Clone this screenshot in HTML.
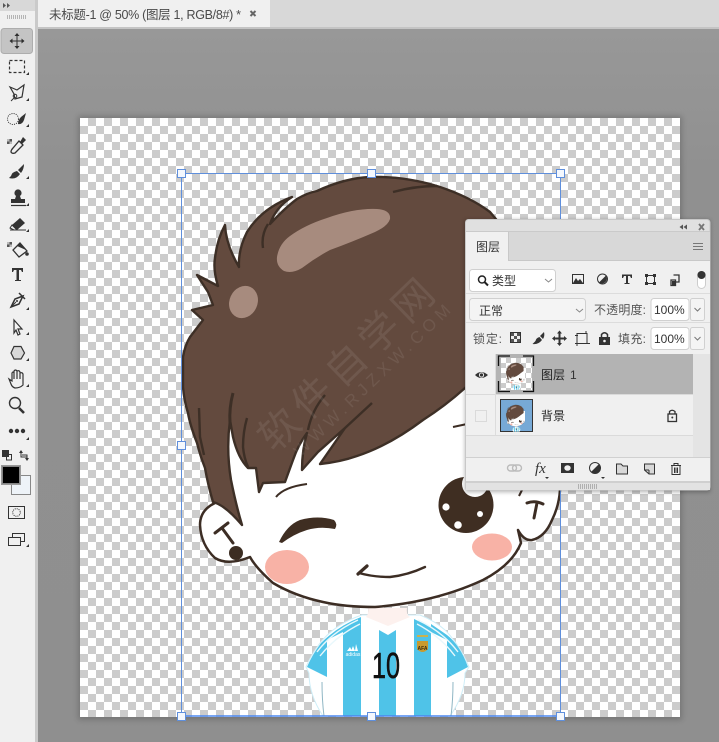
<!DOCTYPE html>
<html><head><meta charset="utf-8">
<style>
html,body{margin:0;padding:0;width:719px;height:742px;overflow:hidden;background:#919191}
svg{display:block}
text{font-family:"Liberation Sans","Noto Sans CJK SC",sans-serif}
</style></head>
<body>
<svg width="719" height="742" viewBox="0 0 719 742" xmlns="http://www.w3.org/2000/svg">
<defs>
<pattern id="chk" x="80" y="118" width="16" height="16" patternUnits="userSpaceOnUse"><rect width="16" height="16" fill="#fff"/><rect x="8" width="8" height="8" fill="#ccc"/><rect y="8" width="8" height="8" fill="#ccc"/></pattern>
<pattern id="chk2" x="501" y="358" width="10" height="10" patternUnits="userSpaceOnUse"><rect width="10" height="10" fill="#fff"/><rect x="5" width="5" height="5" fill="#ccc"/><rect y="5" width="5" height="5" fill="#ccc"/></pattern>
<linearGradient id="bgG" x1="0" y1="0" x2="0" y2="1"><stop offset="0" stop-color="#989898"/><stop offset=".2" stop-color="#909090"/><stop offset="1" stop-color="#8f8f8f"/></linearGradient>
<filter id="bl" x="-10%" y="-10%" width="120%" height="120%"><feGaussianBlur stdDeviation="3"/></filter>
<filter id="bs" x="-10%" y="-10%" width="120%" height="120%"><feGaussianBlur stdDeviation="2"/></filter>
<clipPath id="cv"><rect x="80" y="118" width="600" height="598"/></clipPath>
</defs>

<!-- workspace -->
<rect x="38" y="28" width="681" height="714" fill="url(#bgG)"/>
<rect x="78" y="116" width="604" height="604" fill="#000" opacity=".18" filter="url(#bl)"/>
<rect x="80" y="118" width="600" height="599" fill="url(#chk)"/>

<!-- artwork -->
<g id="art" clip-path="url(#cv)">
 <!-- shirt -->
 <path d="M362 615 Q335 624 320 643 Q311 655 306 667 L309 673 Q309 695 323 716 L450 716 Q465 695 465 673 L469 667 Q460 645 445 630 Q435 621 420 615 Z" fill="#fff" stroke="#cfeef8" stroke-width="1"/>
 <path d="M361 617 Q338 626 321 643 Q312 655 307 667 L327 677 L327 640 L343 632 L343 716 L361 716 Z" fill="#4fc3e8"/>
 <path d="M379 630 L388 635 L396 630 L396 716 L379 716 Z" fill="#4fc3e8"/>
 <path d="M414 619 L431 627 L431 716 L414 716 Z" fill="#4fc3e8"/>
 <path d="M447 640 L447 678 L468 667 Q460 645 447 635 L431 624 L431 632 Z" fill="#4fc3e8"/>
 <path d="M317 652 Q332 632 358 620 M320 656 Q336 636 360 624" stroke="#e8f8fc" stroke-width="1.400" fill="none"/>
 <path d="M458 652 Q443 632 418 620 M455 656 Q440 636 417 624" stroke="#e8f8fc" stroke-width="1.400" fill="none"/>
 <path d="M368 608 L407 608 Q406 615 410 617 L388 626 L366 617 Q369 613 368 608 Z" fill="#fdf1ee"/>
 <path d="M322 682 Q322 700 324 716 M453 682 Q453 700 451 716" stroke="#8fb6c4" stroke-width="1" fill="none"/>
 <path d="M347 651 L350 647 L352 651 Z M351 651 L353 646 L355 651 Z M355 651 L356 644 L358 651 Z" fill="#fff"/>
 <text x="353" y="656" font-size="5" fill="#fff" text-anchor="middle">adidas</text>
 <rect x="417" y="635" width="11" height="2" fill="#c9b24e"/>
 <path d="M417 641 h11 v8 q-5.500 6 -11 0 Z" fill="#c89a2e"/>
 <text x="422.500" y="650" font-size="5" font-weight="bold" fill="#3a2b10" text-anchor="middle">AFA</text>
 <text x="386" y="678" font-size="36" fill="#111" stroke="#111" stroke-width=".6" text-anchor="middle" textLength="28" lengthAdjust="spacingAndGlyphs">10</text>

 <!-- face -->
 <path d="M215 503 Q200 510 200 525 Q201 545 215 558 Q228 566 250 557 Q256 568 273 583 Q295 596 323 602 Q345 607 375 607 Q400 605 423 600 Q455 593 483 580 Q512 565 521 543 L518 530 Q524 541 532 540 Q545 537 552 520 Q559 506 560 490 L560 300 L240 300 L200 420 Z" fill="#fff"/>
 <path d="M215 503 Q200 510 200 525 Q201 545 215 558 Q228 566 250 557 Q256 568 273 583 Q295 596 323 602 Q345 607 375 607 Q400 605 423 600 Q455 593 483 580 Q512 565 521 543 L518 530 Q524 541 532 540 Q545 537 552 520 Q559 506 560 490" fill="none" stroke="#3c2d24" stroke-width="2.500" stroke-linejoin="round"/>
 <path d="M519 496 L522 490" stroke="#3c2d24" stroke-width="2" fill="none"/>
 <!-- ears -->
 <path d="M215 533 L228 523 M222 528 L233 543" stroke="#3c2d24" stroke-width="3" fill="none" stroke-linecap="round"/>
 <circle cx="236" cy="553" r="7" fill="#3c2d22"/>
 <path d="M527 503 Q535 500 543 504 M537 503 L534 518" stroke="#3c2d24" stroke-width="3" fill="none" stroke-linecap="round"/>
 <!-- eye -->
 <ellipse cx="466" cy="505" rx="27.500" ry="28" fill="#3f2e22"/>
 <circle cx="475" cy="484" r="13" fill="#fff"/>
 <circle cx="446" cy="507" r="3.600" fill="#fff"/>
 <circle cx="458" cy="525" r="3.800" fill="#fff"/>
 <circle cx="480" cy="514" r="3" fill="#fff"/>
 <!-- wink -->
 <path d="M279 542 Q287 525 300 520 Q318 515 334 520 Q338 524 335 529 Q320 526 307 530 Q294 534 282 543 Z" fill="#3f2e22"/>
 <path d="M276 497 Q284 487 307 484" stroke="#3c2d24" stroke-width="2" fill="none"/>
 <path d="M453 427 L467 424" stroke="#3c2d24" stroke-width="2" fill="none"/>
 <!-- cheeks -->
 <ellipse cx="287" cy="567" rx="22" ry="17" fill="#f8b2a6"/>
 <ellipse cx="492" cy="547" rx="20" ry="13.500" fill="#f8b2a6"/>
 <!-- mouth -->
 <path d="M358 574 L367 566" stroke="#3c2d24" stroke-width="3.200" fill="none" stroke-linecap="round"/>
 <path d="M359 573 Q373 577 390 577 Q408 575 425 567" stroke="#3c2d24" stroke-width="2.400" fill="none" stroke-linecap="round"/>

 <!-- hair -->
 <path d="M197 275 L218 286 Q213 270 215 258 Q217 240 225 225 Q226 245 239 267 Q238 250 247 232 Q262 208 292 197 Q276 207 270 224 Q285 208 297 199 Q307 193 317 191 Q345 178 370 177 Q405 176 440 187 Q470 197 490 212 L530 260 L530 340 L465 388 Q445 406 423 420 Q390 445 357 456 Q340 462 320 464 L345 428 L318 452 L302 470 Q302 450 307 433 Q298 445 293 460 L285 482 L263 483 L259 492 L256 468 L248 468 Q238 458 233 437 L230 420 Q226 450 231 480 Q236 505 242 525 Q225 505 213 502 Q208 485 205 468 Q200 455 197 443 Q190 425 188 413 Q184 400 183 387 L183 357 Q185 345 190 337 L203 320 L192 310 L213 305 L208 292 Z" fill="#634a3e" stroke="#3d2f26" stroke-width="2.400" stroke-linejoin="round"/>
 <!-- hair inner strokes -->
 <path d="M233 393 Q229 408 230 423" stroke="#3d2f26" stroke-width="3" fill="none"/>
 <path d="M247 418 Q243 432 243 447 Q244 458 248 467" stroke="#3d2f26" stroke-width="2.400" fill="none"/>
 <path d="M199 408 L200 437 L204 455" stroke="#3d2f26" stroke-width="2.400" fill="none"/>
 <path d="M372 403 L345 428 M325 395 Q312 410 308 430 M393 192 Q415 186 437 186 M268 224 Q261 235 263 248" stroke="#3d2f26" stroke-width="2.400" fill="none"/>
 <!-- highlights -->
 <path d="M277 257 Q279 244 290 236 Q305 225 327 218 Q355 208 377 209 Q391 210 390 219 Q388 226 375 232 Q352 242 330 250 Q315 258 302 268 Q292 274 284 271 Q276 266 277 257 Z" fill="#a78b7e"/>
 <ellipse cx="243.500" cy="302" rx="14" ry="16.500" transform="rotate(25 243.500 302)" fill="#a78b7e"/>
</g>
<!-- watermark -->
<g fill="#fff" fill-opacity=".08" transform="rotate(-44 346 365)">
 <text x="346" y="379" font-size="40" text-anchor="middle" textLength="226" lengthAdjust="spacing">软件自学网</text>
 <text x="354" y="400" font-size="17" text-anchor="middle" textLength="210" lengthAdjust="spacing">WWW.RJZXW.COM</text>
</g>

<!-- transform box -->
<rect x="181.500" y="173.500" width="379" height="542.500" fill="none" stroke="#5f8fdc" stroke-width="1"/>
<path d="M181 716 H560" stroke="#4d88f0" stroke-width="1.500"/>
<g fill="#f4f8fe" stroke="#5f8fdc">
 <rect x="177.500" y="169.500" width="8" height="8"/><rect x="367.500" y="169.500" width="8" height="8"/><rect x="556.500" y="169.500" width="8" height="8"/>
 <rect x="177.500" y="441.500" width="8" height="8"/>
 <rect x="177.500" y="712.500" width="8" height="8"/><rect x="367.500" y="712.500" width="8" height="8"/><rect x="556.500" y="712.500" width="8" height="8"/>
</g>

<!-- tab bar -->
<rect x="38" y="0" width="681" height="28" fill="#d8d8d8"/>
<rect x="38" y="0" width="232" height="28" fill="#f0f0f0"/>
<rect x="38" y="27" width="681" height="2" fill="#c4c4c4"/>
<text x="49" y="19" font-size="12.500" fill="#4a4a4a" textLength="192" lengthAdjust="spacing">未标题-1 @ 50% (图层 1, RGB/8#) *</text>
<path d="M250.500 11 L255.500 16 M255.500 11 L250.500 16" stroke="#666" stroke-width="2"/>

<!-- toolbar -->
<rect x="0" y="0" width="35" height="742" fill="#f0f0f0"/>
<rect x="35" y="0" width="3" height="742" fill="#cacaca"/>
<rect x="0" y="0" width="35" height="11" fill="#d8d8d8"/>
<path d="M3 3 L6 5.500 L3 8 Z M7 3 L10 5.500 L7 8 Z" fill="#555"/>
<path d="M7.500 15 V19 M9.500 15 V19 M11.500 15 V19 M13.500 15 V19 M15.500 15 V19 M17.500 15 V19 M19.500 15 V19 M21.500 15 V19 M23.500 15 V19 M25.500 15 V19" stroke="#b4b4b4" stroke-width="1"/>
<rect x="1" y="28.500" width="31.500" height="25" rx="3" fill="#c4c4c4" stroke="#adadad"/>
<!-- move -->
<g fill="#2e2e2e">
 <path d="M16.500 34 H17.500 V48 H16.500 Z M10 40.500 H24 V41.500 H10 Z"/>
 <path d="M17 33 L19.500 36 H14.500 Z M17 49 L19.500 46 H14.500 Z M9.500 41 L12.500 38.500 V43.500 Z M24.500 41 L21.500 38.500 V43.500 Z"/>
</g>
<!-- marquee -->
<rect x="9.500" y="60.500" width="15" height="12" fill="none" stroke="#333" stroke-width="1.200" stroke-dasharray="3 2"/>
<!-- lasso -->
<path d="M10 87 L17 90 L24 85 L22 97 L15 99 L14 94 Z" fill="none" stroke="#333" stroke-width="1.200"/>
<circle cx="15" cy="96" r="1.800" fill="none" stroke="#333"/>
<path d="M14 98 L11 101" stroke="#333"/>
<!-- quick select -->
<circle cx="13" cy="119" r="5.500" fill="none" stroke="#333" stroke-dasharray="1 1.200"/>
<path d="M26 113 L21 117 Q18 120 18 124 Q22 125 24 120 Z" fill="#333"/>
<!-- eyedropper -->
<g><rect x="7" y="139" width="5" height="5" fill="#555"/><path d="M7 139 h2.500 v2.500 h-2.500 z M9.500 141.500 h2.500 v2.500 h-2.500 z" fill="#bbb"/></g>
<path d="M23 137 L26 140 L22 144 L20 142 Z" fill="#333"/>
<path d="M19 141 L23 145 L15 153 Q12 154 11 152 Q11 150 13 148 Z" fill="none" stroke="#333" stroke-width="1.300"/>
<!-- brush -->
<path d="M24 164 L18 170 L21 173 Q24 169 24 164 Z M17 171 Q12 172 11 176 L9 178 Q16 180 20 174 Z" fill="#333"/>
<!-- stamp -->
<circle cx="18" cy="193" r="3.600" fill="#333"/>
<path d="M16 196 H20 L21 199 H25 V203 H11 V199 H15 Z" fill="#333"/>
<path d="M11 205.500 H26" stroke="#333" stroke-width="1.200"/>
<!-- eraser -->
<path d="M20 218 L25 223 L17 230 L12 225 Z" fill="#333"/>
<path d="M12 225 L17 230 L14 230 L10 228 Z M10 230 H26" fill="none" stroke="#333"/>
<!-- bucket -->
<g><rect x="7" y="242" width="5" height="5" fill="#555"/><path d="M7 242 h2.500 v2.500 h-2.500 z M9.500 244.500 h2.500 v2.500 h-2.500 z" fill="#bbb"/></g>
<path d="M20 243 L27 251 L19 257 L13 250 Z" fill="none" stroke="#333" stroke-width="1.300"/>
<path d="M17 246 L20 243 L26 250 Z" fill="#333"/>
<circle cx="27" cy="254" r="1.800" fill="#333"/>
<!-- T -->
<path d="M12 268 H23 V272 H22 L21 270 H19 V280 H21 V281 H15 V280 H16.500 V270 H14 L13 272 H12 Z" fill="#333"/>
<!-- pen -->
<path d="M23 296 L15 299 L11 307 L19 304 Z M19 293 L25 299" fill="none" stroke="#333" stroke-width="1.500"/>
<path d="M11 307 L16 302" stroke="#333"/>
<circle cx="17" cy="301" r="1" fill="#333"/>
<!-- arrow -->
<path d="M14 320 L22 329 L18 329 L20 334 L18 335 L16 330 L14 333 Z" fill="#f4f4f4" stroke="#333" stroke-width="1.200"/>
<!-- hexagon -->
<path d="M11 353 L14 346.500 H21 L24.500 353 L21 359 H14 Z" fill="#d8d8d8" stroke="#333" stroke-width="1.200"/>
<!-- hand -->
<path d="M9 379 L12 381 V373 Q13 371 14 373 V371 Q15.500 369 17 371 V371 Q19 370 20 372 V373 Q22 372 23 374 V385 Q20 388 15 388 Q12 387 11 384 Z M14 373 V379 M17 371 V379 M20 372 V379" fill="none" stroke="#333" stroke-width="1.200"/>
<!-- zoom -->
<circle cx="15" cy="403" r="5.500" fill="none" stroke="#333" stroke-width="1.400"/>
<path d="M19 408 L24 413" stroke="#333" stroke-width="2.600"/>
<!-- dots -->
<circle cx="11" cy="431" r="2.200" fill="#333"/><circle cx="17" cy="431" r="2.200" fill="#333"/><circle cx="23" cy="431" r="2.200" fill="#333"/>
<!-- small corner triangles -->
<path d="M29 75 l-3 0 3-3z M29 101 l-3 0 3-3z M29 127 l-3 0 3-3z M29 179 l-3 0 3-3z M29 206 l-3 0 3-3z M29 232 l-3 0 3-3z M29 310 l-3 0 3-3z M29 335 l-3 0 3-3z M29 361 l-3 0 3-3z M29 387 l-3 0 3-3z M29 440 l-3 0 3-3z M29 547 l-3 0 3-3z" fill="#333"/>
<!-- default colors -->
<rect x="6.500" y="454.500" width="5" height="5.500" fill="#f0f0f0" stroke="#333"/>
<rect x="2" y="450" width="7" height="7" fill="#333"/>
<path d="M21 452 V457 H27 M27 459 V455 H22" fill="none" stroke="#333" stroke-width="1"/>
<path d="M21 450 L19 453 H23 Z M27 461 L25 458 H29 Z" fill="#333"/>
<!-- fg/bg -->
<rect x="11.500" y="475.500" width="19" height="19" fill="#eef3f8" stroke="#888"/>
<rect x="1.500" y="465.500" width="19" height="19" fill="#000" stroke="#999" stroke-width="1"/>
<rect x="2.500" y="466.500" width="17" height="17" fill="#000" stroke="#ddd" stroke-width=".6"/>
<!-- quick mask -->
<rect x="8.500" y="506.500" width="16" height="12" fill="#f0f0f0" stroke="#333"/>
<circle cx="16.500" cy="512.500" r="3.800" fill="none" stroke="#333" stroke-dasharray="1 1"/>
<!-- screen mode -->
<rect x="12.500" y="533.500" width="12" height="8" fill="none" stroke="#333"/>
<rect x="8.500" y="537.500" width="12" height="8" fill="#f0f0f0" stroke="#333"/>

<!-- LAYERS PANEL -->
<rect x="465" y="220" width="245" height="272" fill="#000" opacity=".3" filter="url(#bs)"/>
<rect x="465.500" y="219.500" width="244.500" height="270.500" rx="3" fill="#e0e0e0" stroke="#c8c8c8"/>
<path d="M466 231.500 H710" stroke="#cacaca"/>
<path d="M683 224.500 L679.500 227 L683 229.500 Z M687 224.500 L683.500 227 L687 229.500 Z" fill="#555"/>
<path d="M699 224 L704 230 M704 224 L699 230" stroke="#777" stroke-width="1.800"/>
<!-- tab row -->
<rect x="466" y="232" width="244" height="29" fill="#d8d8d8"/>
<rect x="466" y="232" width="43" height="29" fill="#f0f0f0"/>
<path d="M508.500 232 V261" stroke="#c8c8c8"/>
<text x="476" y="251" font-size="12" fill="#333">图层</text>
<path d="M693 243.500 H703 M693 246.500 H703 M693 249.500 H703" stroke="#777" stroke-width="1"/>
<!-- options -->
<rect x="466" y="261" width="244" height="93" fill="#f0f0f0"/>
<path d="M508 260.500 H710" stroke="#c8c8c8"/>
<path d="M466 293.500 H710 M466 322.500 H710" stroke="#dcdcdc"/>
<rect x="469.500" y="269.500" width="86" height="22" rx="3" fill="#fff" stroke="#d0d0d0"/>
<circle cx="482" cy="279.500" r="3.500" fill="none" stroke="#222" stroke-width="1.500"/>
<path d="M484.500 282 L488 285.500" stroke="#222" stroke-width="2"/>
<text x="492" y="285" font-size="12" fill="#333">类型</text>
<path d="M545 279 L548.500 282 L552 279" fill="none" stroke="#888"/>
<!-- filter icons -->
<rect x="572.500" y="274.500" width="11" height="9" fill="#f0f0f0" stroke="#333"/>
<path d="M573 283 L576 278 L578 281 L580 279 L583 283 Z" fill="#333"/>
<circle cx="602.500" cy="279" r="5" fill="#f0f0f0" stroke="#333"/>
<path d="M606 275.500 A5 5 0 0 1 599 282.500 Z" fill="#333"/>
<path d="M622 274.500 H632 V278 H631 L630 276 H628 V283 H629.500 V284 H624.500 V283 H626 V276 H624 L623 278 H622 Z" fill="#333"/>
<rect x="646.500" y="275.500" width="8" height="8" fill="none" stroke="#333"/>
<rect x="645" y="274" width="3" height="3" fill="#333"/><rect x="653" y="274" width="3" height="3" fill="#333"/><rect x="645" y="282" width="3" height="3" fill="#333"/><rect x="653" y="282" width="3" height="3" fill="#333"/>
<path d="M673.500 275 H679 V282 H676 M671 280 H675.500 V285.500 H671 Z" fill="none" stroke="#333" stroke-width="1.300"/>
<rect x="672" y="281" width="3" height="4" fill="#333"/>
<rect x="697.500" y="271.500" width="8" height="17" rx="4" fill="#fff" stroke="#ccc"/>
<circle cx="701.500" cy="275" r="4" fill="#333"/>
<!-- mode -->
<rect x="469.500" y="298.500" width="116" height="22" rx="3" fill="#f4f4f4" stroke="#d0d0d0"/>
<text x="479" y="315" font-size="12" fill="#333">正常</text>
<path d="M576 309 L579.500 312 L583 309" fill="none" stroke="#888"/>
<text x="594" y="314" font-size="12" fill="#555" textLength="52">不透明度:</text>
<rect x="651" y="298.500" width="38" height="22" rx="3" fill="#fff" stroke="#d0d0d0"/>
<rect x="690.500" y="298.500" width="14" height="22" rx="2" fill="#f4f4f4" stroke="#d0d0d0"/>
<text x="654" y="314" font-size="12" fill="#333">100%</text>
<path d="M694.500 308 L697.500 311 L700.500 308" fill="none" stroke="#777"/>
<!-- lock row -->
<text x="473" y="343" font-size="12" fill="#555" textLength="29">锁定:</text>
<rect x="510.500" y="332.500" width="10" height="10" fill="#f0f0f0" stroke="#333"/>
<path d="M511 333 h3 v3 h-3z M517 333 h3 v3 h-3z M514 336 h3 v3 h-3z M511 339 h3 v3 h-3z M517 339 h3 v3 h-3z" fill="#555"/>
<path d="M544 332 L540 336 L543 339 Q545 336 544 332 Z M539.500 337 Q536 338 535.500 341 L532.500 344 Q538 345 542 340 Z" fill="#333"/>
<g fill="#333"><path d="M558.500 333 H560.500 V344 H558.500 Z M554 337.500 H565 V339.500 H554 Z"/><path d="M559.500 330.500 L562 333.500 H557 Z M559.500 346 L562 343 H557 Z M552 338.500 L555 336 V341 Z M567 338.500 L564 336 V341 Z"/></g>
<path d="M577 333.500 H587 V343.500 H577 Z M575 335.500 H578 M586 331 V334 M575 343.500 H590 M577 341 V346" fill="none" stroke="#333"/>
<path d="M599 337 H610 V345 H599 Z" fill="#333"/><path d="M601.500 337 V334.500 Q604.500 331 607.500 334.500 V337" fill="none" stroke="#333" stroke-width="1.500"/><circle cx="604.500" cy="341" r="1.300" fill="#f0f0f0"/>
<text x="618" y="343" font-size="12" fill="#555" textLength="28">填充:</text>
<rect x="651" y="327.500" width="38" height="22" rx="3" fill="#fff" stroke="#d0d0d0"/>
<rect x="690.500" y="327.500" width="14" height="22" rx="2" fill="#f4f4f4" stroke="#d0d0d0"/>
<text x="654" y="343" font-size="12" fill="#333">100%</text>
<path d="M694.500 337 L697.500 340 L700.500 337" fill="none" stroke="#777"/>

<!-- layers -->
<rect x="466" y="354" width="244" height="103" fill="#e4e4e4"/>
<rect x="466" y="354" width="227" height="40" fill="#f0f0f0"/>
<rect x="496" y="354" width="197" height="40" fill="#b3b3b3"/>
<rect x="466" y="395" width="227" height="40" fill="#f0f0f0"/>
<path d="M466 394.500 H693 M466 435.500 H693" stroke="#dadada"/>
<path d="M495.500 354 V435" stroke="#dcdcdc"/>
<rect x="466" y="436" width="227" height="21" fill="#ebebeb"/>
<!-- eye -->
<path d="M475 375 Q481 369 488 375 Q481 381 475 375 Z" fill="#333"/>
<circle cx="481.500" cy="375" r="2.600" fill="#f0f0f0"/><circle cx="481.500" cy="375" r="1.600" fill="#333"/>
<rect x="475.500" y="410.500" width="11" height="11" fill="none" stroke="#dadada"/>
<!-- thumb 1 -->
<rect x="501" y="358" width="31" height="32" fill="url(#chk2)"/>
<path d="M498.500 366 V356 H510 M523 356 H533.500 V366 M498.500 381 V391.500 H510 M523 391.500 H533.500 V381" fill="none" stroke="#111" stroke-width="1.300"/>
<use href="#art" transform="translate(497 354) scale(.05)"/>
<text x="541" y="379" font-size="12" fill="#222">图层</text><text x="570" y="379" font-size="12" fill="#333">1</text>
<!-- thumb 2 -->
<rect x="500.500" y="399.500" width="32" height="32" fill="#77a9d6" stroke="#333"/>
<use href="#art" transform="translate(497 396) scale(.05)"/>
<text x="541" y="420" font-size="12" fill="#222">背景</text>
<rect x="668" y="414" width="8.500" height="7.500" fill="none" stroke="#333" stroke-width="1.300"/>
<path d="M669.500 414 V411.500 Q672 409 675 411.500 V414" fill="none" stroke="#333" stroke-width="1.300"/>
<circle cx="672.300" cy="417.500" r="1" fill="#333"/>
<!-- footer -->
<rect x="466" y="458" width="244" height="24" fill="#f0f0f0"/>
<path d="M466 457.500 H710" stroke="#d0d0d0"/>
<rect x="466" y="481" width="244" height="2" fill="#cfcfcf"/>
<rect x="466" y="483" width="244" height="7" fill="#e2e2e2"/>
<path d="M578.500 484 V489 M580.500 484 V489 M582.500 484 V489 M584.500 484 V489 M586.500 484 V489 M588.500 484 V489 M590.500 484 V489 M592.500 484 V489 M594.500 484 V489 M596.500 484 V489" stroke="#b0b0b0"/>
<g fill="none" stroke="#bbb" stroke-width="1.400"><rect x="507.500" y="465" width="9" height="6" rx="3"/><rect x="512.500" y="465" width="9" height="6" rx="3"/></g>
<text x="535" y="473" font-size="15" font-style="italic" fill="#333" style="font-family:'Liberation Serif',serif">fx</text>
<path d="M545 477 H549 L547 479 Z" fill="#333"/>
<rect x="561" y="463" width="13" height="10" fill="#333"/><ellipse cx="567.500" cy="468" rx="3.200" ry="2.800" fill="#f0f0f0"/>
<circle cx="595" cy="468" r="5.500" fill="#f0f0f0" stroke="#333"/><path d="M599 464 A5.500 5.500 0 0 1 591 472 Z" fill="#333"/>
<path d="M601 477 H605 L603 479 Z" fill="#333"/>
<path d="M616.500 474 V464 H621 L623 466 H627.500 V474 Z" fill="#d8d8d8" stroke="#333"/>
<path d="M644.500 464 H654.500 V474 H649 L644.500 470 Z M649 470 V474 M644.500 470 H649" fill="#d8d8d8" stroke="#333"/>
<path d="M671 465.500 H681 M674 465 V463.500 H678 V465 M672 466 V474.500 H680 V466 M674.500 467.500 V473 M676 467.500 V473 M677.500 467.500 V473" fill="none" stroke="#333"/>
</svg>
</body></html>
